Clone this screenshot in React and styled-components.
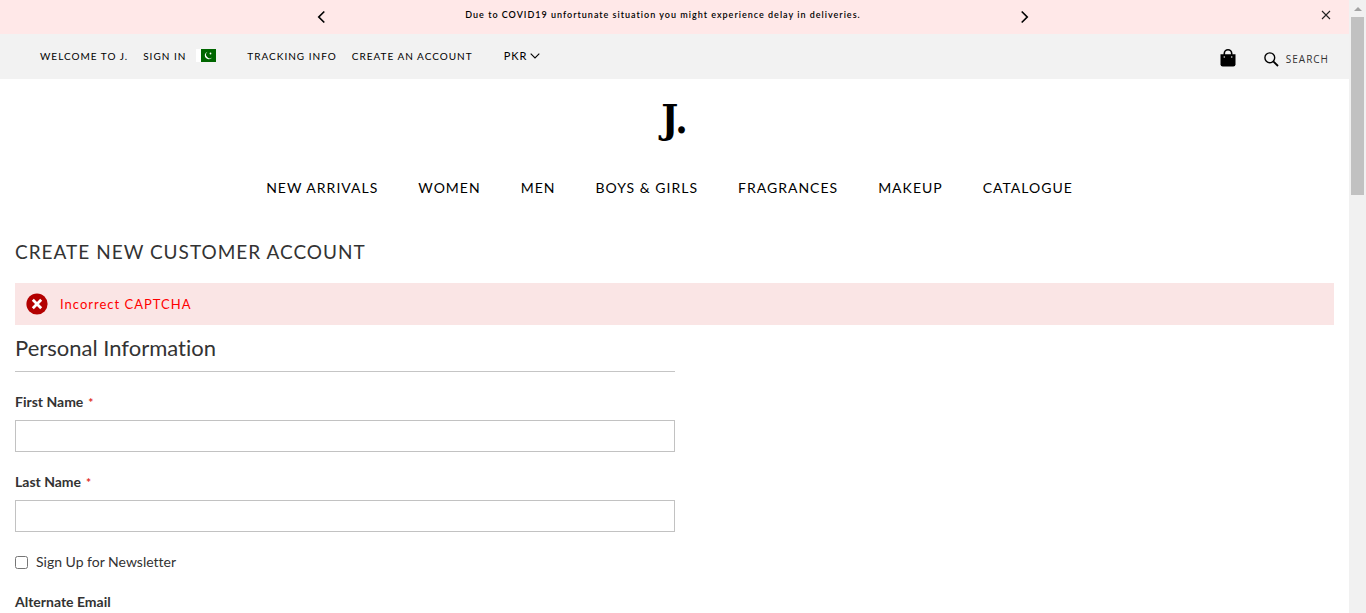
import React from 'react';
import styled, { createGlobalStyle } from 'styled-components';

const GlobalStyle = createGlobalStyle`
  *, *::before, *::after { box-sizing: border-box; }
  body {
    margin: 0;
    background: #fff;
    color: #333;
    font-family: Lato, 'Open Sans', sans-serif;
    font-size: 14px;
    line-height: 20px;
    font-variant-ligatures: none;
  }
  a { color: inherit; text-decoration: none; }
  button { font: inherit; color: inherit; background: none; border: 0; padding: 0; cursor: pointer; }
  svg { display: block; }
`;

const Shell = styled.div`
  display: grid;
  grid-template-columns: minmax(0, 1fr) 17px;
  height: 100vh;
  overflow: hidden;
`;

const Page = styled.div`
  min-width: 0;
`;

const Notice = styled.aside`
  display: grid;
  grid-template-columns: minmax(0, 1fr) 720px minmax(0, 1fr);
  height: 34px;
  background: #ffe8e8;
  color: #000;
`;

const NoticeSlide = styled.div`
  grid-column: 2;
  display: flex;
  justify-content: space-between;
  padding: 0 4px 0 1px;
`;

const NoticeText = styled.p`
  margin: 0;
  padding: 5px 20px 0 0;
  font-size: 9px;
  font-weight: 600;
  letter-spacing: 1px;
`;

const ArrowButton = styled.button`
  display: flex;
  align-items: center;
  height: 34px;
`;

const CloseButton = styled.button`
  justify-self: end;
  display: flex;
  align-items: center;
  height: 30px;
  margin-right: 18px;
`;

const TopBar = styled.div`
  display: flex;
  justify-content: space-between;
  height: 45px;
  padding: 0 20px 0 40px;
  background: #f2f2f2;
  color: #000;
`;

const TopLinks = styled.div`
  display: flex;
  align-items: center;
  height: 44px;
  font-size: 10px;
  letter-spacing: 1px;
`;

const TopGroup = styled.div`
  display: flex;
  align-items: center;
  gap: 15px;
  margin-right: ${(p) => p.$after}px;
`;

const FlagLink = styled.a`
  margin-right: 31px;
  padding-bottom: 1px;
`;

const Currency = styled.button`
  display: flex;
  align-items: center;
  gap: 3px;
  font-size: 11px;
  letter-spacing: 1px;
`;

const Tools = styled.div`
  display: flex;
  align-items: center;
  gap: 28px;
  height: 48px;
`;

const SearchButton = styled.button`
  display: flex;
  align-items: center;
  gap: 7px;
  padding-top: 2px;
  font-family: 'Open Sans', sans-serif;
  font-size: 10px;
  letter-spacing: 1px;
  color: #333;
`;

const Header = styled.header`
  display: flex;
  flex-direction: column;
  align-items: center;
  color: #000;
`;

const Logo = styled.a`
  margin-top: 16px;
  font-family: 'DejaVu Serif Condensed', 'DejaVu Serif', serif;
  font-size: 40px;
  font-weight: 700;
  line-height: 48px;
`;

const Nav = styled.nav`
  display: flex;
  gap: 40px;
  margin-top: 35px;
  padding-right: 10px;
  font-size: 14px;
  letter-spacing: 1px;
`;

const Main = styled.main`
  padding: 0 15px;
`;

const Title = styled.h1`
  margin: 39px 0 16px;
  font-size: 19px;
  font-weight: 400;
  line-height: 30px;
  letter-spacing: 1px;
`;

const ErrorMessage = styled.div`
  display: flex;
  align-items: center;
  gap: 12px;
  height: 42px;
  padding: 0 11px;
  background: #fae5e5;
  color: #f00;
  font-size: 13px;
  letter-spacing: 1px;
`;

const Form = styled.form`
  width: 50%;
`;

const Fieldset = styled.fieldset`
  margin: 0;
  padding: 0;
  border: 0;
`;

const Legend = styled.legend`
  width: 100%;
  margin-bottom: 20px;
  padding: 8px 0;
  border-bottom: 1px solid #c5c5c5;
  font-size: 22px;
  line-height: 30px;
`;

const Field = styled.div`
  margin-bottom: 20px;
`;

const Label = styled.label`
  display: block;
  margin-bottom: 8px;
  font-weight: 700;
`;

const Required = styled.span`
  margin-left: 5px;
  color: #e02b27;
  font-size: 12px;
  line-height: 12px;
`;

const TextInput = styled.input`
  display: block;
  width: 100%;
  height: 32px;
  padding: 0 9px;
  border: 1px solid #c2c2c2;
  background: #fff;
  font: inherit;
`;

const CheckField = styled.div`
  display: flex;
  align-items: center;
  gap: 8px;
  margin-bottom: 20px;

  input { width: 13px; height: 13px; margin: 0; }
`;

const ScrollTrack = styled.div`
  display: flex;
  flex-direction: column;
  align-items: center;
  justify-content: space-between;
  background: #f1f1f1;
`;

const ScrollTop = styled.div`
  width: 13px;
`;

const ScrollEnd = styled.div`
  display: flex;
  align-items: center;
  justify-content: center;
  height: 17px;
`;

const Thumb = styled.div`
  height: 29vh;
  background: #c1c1c1;
`;

const Chevron = ({ d }) => (
  <svg width="10" height="14" viewBox="0 0 10 14" fill="none" stroke="#000" strokeWidth="1.7">
    <path d={d} />
  </svg>
);

const Flag = () => (
  <svg width="20" height="13" viewBox="0 0 20 13" role="img" aria-label="Pakistan">
    <rect width="20" height="13" fill="#fff" />
    <rect x="5" width="15" height="13" fill="#060" />
    <path d="M11.500 2.700a3.900 3.900 0 1 0 4.600 5.700a3.500 3.500 0 1 1-4.600-5.700z" fill="#fff" />
    <circle cx="14.500" cy="4.500" r=".9" fill="#fff" />
  </svg>
);

const Bag = () => (
  <svg width="16" height="18" viewBox="0 0 16 18">
    <path d="M.5 5.300h15v10q0 2.200-2.200 2.200H2.700q-2.200 0-2.200-2.200z" fill="#000" />
    <path d="M4.300 8V4.500a3.700 3.700 0 0 1 7.400 0V8" fill="none" stroke="#000" strokeWidth="1.600" />
    <circle cx="4.300" cy="8" r=".8" fill="#ddd" />
    <circle cx="11.700" cy="8" r=".8" fill="#ddd" />
  </svg>
);

const Magnifier = () => (
  <svg width="15" height="15" viewBox="0 0 15 15" fill="none" stroke="#000">
    <circle cx="5.800" cy="5.800" r="4.900" strokeWidth="1.400" />
    <path d="M9.300 9.300l4.700 4.700" strokeWidth="1.800" />
  </svg>
);

const ErrorIcon = () => (
  <svg width="22" height="22" viewBox="0 0 22 22">
    <circle cx="11" cy="11" r="10.600" fill="#b30000" />
    <path d="M6.800 6.800l8.400 8.400M15.200 6.800l-8.400 8.400" stroke="#fff" strokeWidth="2.800" />
  </svg>
);

const menu = ['NEW ARRIVALS', 'WOMEN', 'MEN', 'BOYS & GIRLS', 'FRAGRANCES', 'MAKEUP', 'CATALOGUE'];

export default function App() {
  return (
    <>
      <GlobalStyle />
      <Shell>
        <Page>
          <Notice>
            <NoticeSlide>
              <ArrowButton type="button" aria-label="Previous"><Chevron d="M8.300 1.500L2.800 7l5.500 5.500" /></ArrowButton>
              <NoticeText>Due to COVID19 unfortunate situation you might experience delay in deliveries.</NoticeText>
              <ArrowButton type="button" aria-label="Next"><Chevron d="M1.700 1.500L7.200 7l-5.500 5.500" /></ArrowButton>
            </NoticeSlide>
            <CloseButton type="button" aria-label="Close">
              <svg width="10" height="10" viewBox="0 0 10 10" stroke="#222" strokeWidth="1.100">
                <path d="M1 1l8 8M9 1l-8 8" />
              </svg>
            </CloseButton>
          </Notice>
          <TopBar>
            <TopLinks>
              <TopGroup $after={10}>
                <span>WELCOME TO J.</span>
                <a href="#signin">SIGN IN</a>
              </TopGroup>
              <FlagLink href="#country"><Flag /></FlagLink>
              <TopGroup $after={31}>
                <a href="#tracking">TRACKING INFO</a>
                <a href="#create">CREATE AN ACCOUNT</a>
              </TopGroup>
              <Currency type="button">
                PKR
                <svg width="10" height="6" viewBox="0 0 10 6" fill="none" stroke="#000" strokeWidth="1.100">
                  <path d="M.7.7L5 5L9.300.7" />
                </svg>
              </Currency>
            </TopLinks>
            <Tools>
              <a href="#cart" aria-label="My bag"><Bag /></a>
              <SearchButton type="button"><Magnifier />SEARCH</SearchButton>
            </Tools>
          </TopBar>
          <Header>
            <Logo href="#home">J.</Logo>
            <Nav>
              {menu.map((item) => <a key={item} href="#menu">{item}</a>)}
            </Nav>
          </Header>
          <Main>
            <Title>CREATE NEW CUSTOMER ACCOUNT</Title>
            <ErrorMessage role="alert"><ErrorIcon />Incorrect CAPTCHA</ErrorMessage>
            <Form>
              <Fieldset>
                <Legend>Personal Information</Legend>
                <Field>
                  <Label htmlFor="first">First Name<Required>*</Required></Label>
                  <TextInput id="first" type="text" />
                </Field>
                <Field>
                  <Label htmlFor="last">Last Name<Required>*</Required></Label>
                  <TextInput id="last" type="text" />
                </Field>
                <CheckField>
                  <input id="newsletter" type="checkbox" />
                  <label htmlFor="newsletter">Sign Up for Newsletter</label>
                </CheckField>
                <Field>
                  <Label htmlFor="email">Alternate Email</Label>
                  <TextInput id="email" type="email" />
                </Field>
              </Fieldset>
            </Form>
          </Main>
        </Page>
        <ScrollTrack aria-hidden="true">
          <ScrollTop>
            <ScrollEnd>
              <svg width="8" height="4" viewBox="0 0 8 4"><path d="M0 4l4-4l4 4z" fill="#a3a3a3" /></svg>
            </ScrollEnd>
            <Thumb />
          </ScrollTop>
          <ScrollEnd>
            <svg width="8" height="4" viewBox="0 0 8 4"><path d="M0 0l4 4l4-4z" fill="#505050" /></svg>
          </ScrollEnd>
        </ScrollTrack>
      </Shell>
    </>
  );
}
